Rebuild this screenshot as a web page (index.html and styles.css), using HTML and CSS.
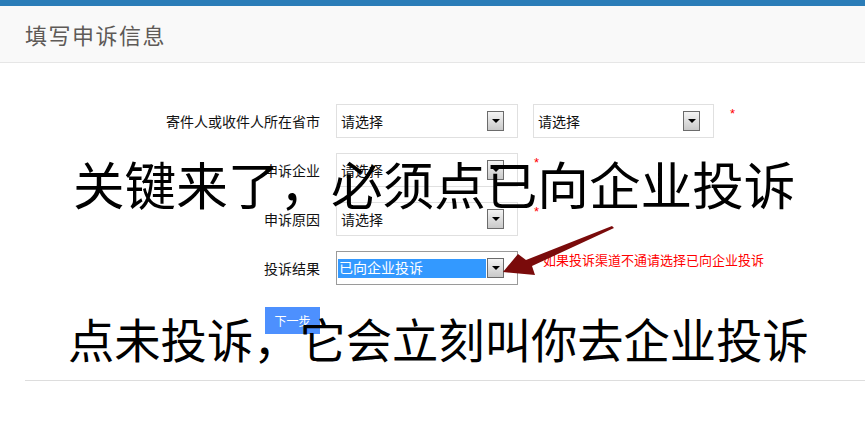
FILE: index.html
```html
<!DOCTYPE html>
<html lang="zh-CN">
<head>
    <meta charset="UTF-8">
    <meta name="viewport" content="width=device-width, initial-scale=1.0">
    <title>填写申诉信息</title>
    <link rel="stylesheet" href="styles.css">
</head>
<body>
    <!-- Top Bar -->
    <div class="topbar"></div>

    <!-- Page Title -->
    <div class="page-head">
        <h2 class="page-title">填写申诉信息</h2>
    </div>

    <div class="content">
        <form class="appeal-form">
            <div class="form-row">
                <label class="form-label">寄件人或收件人所在省市</label>
                <div class="fake-select">
                    <span class="select-text">请选择</span>
                    <span class="select-btn"></span>
                </div>
                <div class="fake-select second">
                    <span class="select-text">请选择</span>
                    <span class="select-btn"></span>
                </div>
                <span class="required">*</span>
            </div>

            <div class="form-row">
                <label class="form-label">申诉企业</label>
                <div class="fake-select">
                    <span class="select-text">请选择</span>
                    <span class="select-btn"></span>
                </div>
                <span class="required">*</span>
            </div>

            <div class="form-row">
                <label class="form-label">申诉原因</label>
                <div class="fake-select">
                    <span class="select-text">请选择</span>
                    <span class="select-btn"></span>
                </div>
                <span class="required">*</span>
            </div>

            <div class="form-row">
                <label class="form-label">投诉结果</label>
                <div class="fake-select focused">
                    <span class="select-text selected">已向企业投诉</span>
                    <span class="select-btn"></span>
                </div>
                <span class="hint">如果投诉渠道不通请选择已向企业投诉</span>
            </div>

            <div class="btn-row">
                <button type="button" class="next-btn">下一步</button>
            </div>
        </form>

        <!-- Annotations drawn over the screenshot -->
        <div class="note note-top">关键来了，必须点已向企业投诉</div>
        <div class="note note-bottom">点未投诉，它会立刻叫你去企业投诉</div>
        <svg class="note-arrow" width="120" height="60" viewBox="0 0 120 60">
            <polygon points="112,6 114,8 32,46 35,55 3,52 18,34 26,40" fill="#7a0b0b"/>
        </svg>
    </div>

    <hr class="bottom-line">
</body>
</html>
```

FILE: styles.css
```css
* {
    margin: 0;
    padding: 0;
    box-sizing: border-box;
}

body {
    font-family: "Liberation Sans", "Noto Sans CJK SC", sans-serif;
    background-color: #fff;
    color: #111;
}

/* Top Bar */
.topbar {
    height: 6px;
    background-color: #2b7db8;
}

/* Title */
.page-head {
    height: 57px;
    background-color: #f9f9f9;
    border-bottom: 1px solid #e6e6e6;
    padding-left: 25px;
    display: flex;
    align-items: center;
}

.page-title {
    font-size: 22px;
    font-weight: normal;
    color: #5e5a57;
    letter-spacing: 1.5px;
}

/* Form */
.content {
    position: relative;
}

.appeal-form {
    padding-top: 41px;
}

.form-row {
    display: flex;
    align-items: center;
    height: 34px;
    margin-bottom: 15px;
}

.form-label {
    width: 320px;
    text-align: right;
    font-size: 14px;
    color: #111;
    margin-right: 16px;
}

.fake-select {
    width: 182px;
    height: 34px;
    border: 1px solid #e0e0e0;
    display: flex;
    align-items: center;
    justify-content: space-between;
    padding: 0 13px 0 3px;
    background: #fff;
}

.fake-select.second {
    width: 181px;
    margin-left: 15px;
}

.fake-select.focused {
    border-color: #9a9a9a;
    padding-left: 1px;
}

.select-text {
    font-size: 14px;
    color: #111;
    padding-left: 1px;
}

.select-text.selected {
    background-color: #3399ff;
    color: #fff;
    width: 148px;
    height: 19px;
    line-height: 19px;
}

.select-btn {
    width: 17px;
    height: 20px;
    border: 1px solid #6b6b6b;
    background: linear-gradient(#f4f4f4, #c9c9c9);
    position: relative;
}

.select-btn::after {
    content: "";
    position: absolute;
    left: 4px;
    top: 7px;
    border-left: 4px solid transparent;
    border-right: 4px solid transparent;
    border-top: 4px solid #000;
}

.required {
    align-self: flex-start;
    margin-left: 16px;
    margin-top: 2px;
    color: #f00;
    font-size: 13px;
}

.hint {
    align-self: flex-start;
    margin-left: 25px;
    margin-top: -1px;
    font-size: 13px;
    color: #f00;
}

/* Next Button */
.btn-row {
    padding-left: 265px;
    margin-top: 22px;
}

.next-btn {
    width: 55px;
    height: 27px;
    background-color: #4d90fe;
    color: #fff;
    border: none;
    font-size: 12px;
    font-family: "Noto Sans CJK SC", sans-serif;
}

/* Overlay notes */
.note {
    position: absolute;
    font-family: "Noto Sans CJK SC", sans-serif;
    color: #000;
    white-space: nowrap;
    line-height: 1;
}

.note-top {
    left: 73px;
    top: 94px;
    font-size: 51.6px;
}

.note-bottom {
    left: 68px;
    top: 252px;
    font-size: 46.3px;
}

.note-arrow {
    position: absolute;
    left: 500px;
    top: 157px;
}

/* Bottom line */
.bottom-line {
    border: none;
    border-top: 1px solid #ddd;
    margin: 46px 0 0 25px;
}
```
